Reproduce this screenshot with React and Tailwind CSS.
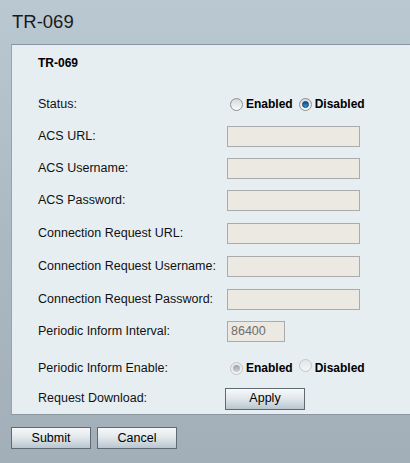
import React from 'react';

const font = { fontFamily: '"Liberation Sans", Arial, sans-serif' };

// small radio bullet, drawn with css
const Radio = ({ checked, disabled }) => (
  <span
    className={
      'inline-flex items-center justify-center w-[13px] h-[13px] rounded-full border ' +
      (disabled
        ? 'border-[#c3c6c8] bg-gradient-to-b from-[#e4e6e7] to-[#f4f5f5]'
        : 'border-[#8a9096] bg-gradient-to-b from-[#d5d8db] to-[#fbfbfb]')
    }
  >
    {checked && (
      <span
        className={
          'w-[7px] h-[7px] rounded-full ' +
          (disabled
            ? 'bg-gradient-to-b from-[#9ea2a6] to-[#cfd2d4]'
            : 'bg-gradient-to-b from-[#0b4f8c] to-[#2b9ee8] border border-[#0b3a66]')
        }
      />
    )}
  </span>
);

const RadioPair = ({ value, disabled }) => (
  <div className="flex items-center ml-[3px] font-bold text-[12px] text-black">
    <Radio checked={value === 'on'} disabled={disabled} />
    <span className="ml-[3px]">Enabled</span>
    <span className="ml-[6px]">
      <Radio checked={value === 'off'} disabled={disabled} />
    </span>
    <span className="ml-[3px]">Disabled</span>
  </div>
);

const TextBox = ({ w = 'w-[133px]', value = '' }) => (
  <div
    className={
      w +
      ' h-[21px] border border-[#a9abad] bg-[#ece9e2] text-[12.5px] text-[#6d6d6d] px-[3px] flex items-center'
    }
  >
    {value}
  </div>
);

const Button = ({ children, className = '' }) => (
  <button
    className={
      'w-[80px] h-[22px] border border-[#5f6a73] bg-gradient-to-b from-[#f7f9fa] via-[#dfe6ea] to-[#b9c6cf] text-[12.5px] text-black leading-none ' +
      className
    }
  >
    {children}
  </button>
);

const rows = [
  { label: 'Status:', h: 'h-[32px]', field: <RadioPair value="off" /> },
  { label: 'ACS URL:', h: 'h-[32px]', field: <TextBox /> },
  { label: 'ACS Username:', h: 'h-[32px]', field: <TextBox /> },
  { label: 'ACS Password:', h: 'h-[33px]', field: <TextBox /> },
  { label: 'Connection Request URL:', h: 'h-[33px]', field: <TextBox /> },
  { label: 'Connection Request Username:', h: 'h-[33px]', field: <TextBox /> },
  { label: 'Connection Request Password:', h: 'h-[32px]', field: <TextBox /> },
  { label: 'Periodic Inform Interval:', h: 'h-[33px]', field: <TextBox w="w-[58px]" value="86400" /> },
  { label: 'Periodic Inform Enable:', h: 'h-[40px]', field: <RadioPair value="on" disabled /> },
  { label: 'Request Download:', h: 'h-[21px]', field: <Button className="-ml-[2px]">Apply</Button> },
];

export default function App() {
  return (
    <div
      style={font}
      className="w-[410px] h-[463px] overflow-hidden bg-gradient-to-b from-[#bac8d2] via-[#abb9c3] to-[#a2afb9] flex flex-col"
    >
      <div className="h-[44px] flex items-center pl-[12px] text-[18.5px] text-[#1a1a1a]">TR-069</div>

      <div className="ml-[11px] h-[371px] bg-[#e7eef1] border-t border-l border-b border-t-[#8796a2] border-l-[#97a4ae] border-b-[#8a97a1] pl-[26px]">
        <div className="pt-[11px] h-[25px] text-[12px] font-bold leading-[14px] text-black">TR-069</div>
        <div className="mt-[18px]">
          {rows.map((r) => (
            <div key={r.label} className={'flex items-center ' + r.h}>
              <div className="w-[189px] text-[12.5px] text-[#111]">{r.label}</div>
              {r.field}
            </div>
          ))}
        </div>
      </div>

      <div className="flex gap-[6px] pl-[11px] mt-[12px]">
        <Button>Submit</Button>
        <Button>Cancel</Button>
      </div>
    </div>
  );
}
